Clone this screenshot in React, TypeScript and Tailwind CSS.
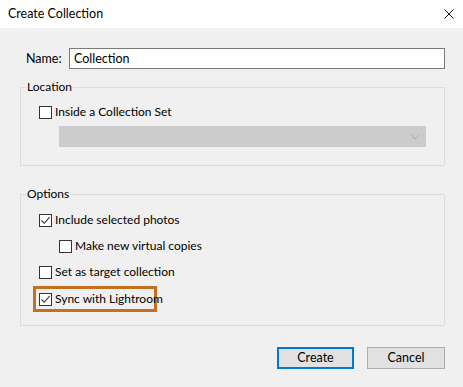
import React, { useState } from 'react';

const font = { fontFamily: 'Lato, "Segoe UI", sans-serif' };

function CheckBox({ checked, onChange }: { checked: boolean; onChange: () => void }) {
  return (
    <span
      onClick={onChange}
      className="flex h-[13px] w-[13px] shrink-0 items-center justify-center border border-[#333333] bg-white"
    >
      {checked && (
        <svg width="11" height="11" viewBox="0 0 11 11">
          <path d="M1.5 5.5 L4.2 8.3 L9.6 2.2" fill="none" stroke="#333333" strokeWidth="1.1" />
        </svg>
      )}
    </span>
  );
}

function Row({ label, checked, onChange }: { label: string; checked: boolean; onChange: () => void }) {
  return (
    <label className="flex h-[16px] items-center gap-[3px] whitespace-nowrap text-[12px] leading-[16px] text-black">
      <CheckBox checked={checked} onChange={onChange} />
      <span>{label}</span>
    </label>
  );
}

export default function App() {
  const [name, setName] = useState('Collection');
  const [insideSet, setInsideSet] = useState(false);
  const [includeSelected, setIncludeSelected] = useState(true);
  const [virtualCopies, setVirtualCopies] = useState(false);
  const [targetCollection, setTargetCollection] = useState(false);
  const [sync, setSync] = useState(true);

  return (
    <div className="flex h-[387px] w-[463px] flex-col bg-[#f0f0f0] text-black" style={font}>
      {/* title bar */}
      <div className="flex h-[28px] shrink-0 items-center justify-between bg-white pl-[8px] pr-[9px]">
        <span className="text-[12.5px] leading-[16px]">Create Collection</span>
        <svg width="10" height="10" viewBox="0 0 10 10">
          <path d="M0.5 0.5 L9.5 9.5 M9.5 0.5 L0.5 9.5" stroke="#111111" strokeWidth="1" />
        </svg>
      </div>

      {/* name */}
      <div className="mt-[20px] flex items-center pl-[26px] pr-[18px]">
        <span className="w-[43px] text-[12.5px] leading-[16px]">Name:</span>
        <input
          value={name}
          onChange={(e) => setName(e.target.value)}
          className="h-[21px] flex-1 border border-[#7a7a7a] bg-white px-[4px] text-[12.5px] leading-[16px] outline-none"
        />
      </div>

      {/* location */}
      <fieldset className="mx-[18px] ml-[20px] mt-[10px] border border-[#dcdcdc] pb-[18px]">
        <legend className="ml-[5px] px-[1px] text-[12px] leading-[16px]">Location</legend>
        <div className="pl-[18px] pt-[9px]">
          <Row label="Inside a Collection Set" checked={insideSet} onChange={() => setInsideSet(!insideSet)} />
        </div>
        <div className="ml-[38px] mr-[18px] mt-[6px] flex h-[21px] items-center justify-end bg-[#cccccc] pr-[6px]">
          <svg width="10" height="6" viewBox="0 0 10 6">
            <path d="M1 1 L5 5 L9 1" fill="none" stroke="#a8a8a8" strokeWidth="1" />
          </svg>
        </div>
      </fieldset>

      {/* options */}
      <fieldset className="mx-[18px] ml-[20px] mt-[20px] border border-[#dcdcdc] pb-[17px]">
        <legend className="ml-[5px] px-[1px] text-[12px] leading-[16px]">Options</legend>
        <div className="flex flex-col gap-[10px] pl-[18px] pt-[10px]">
          <Row label="Include selected photos" checked={includeSelected} onChange={() => setIncludeSelected(!includeSelected)} />
          <div className="pl-[20px]">
            <Row label="Make new virtual copies" checked={virtualCopies} onChange={() => setVirtualCopies(!virtualCopies)} />
          </div>
          <Row label="Set as target collection" checked={targetCollection} onChange={() => setTargetCollection(!targetCollection)} />
          <div className="-mb-[4px] -ml-[6px] -mt-[4px] w-[124px] border-[3px] border-[#c4701f] py-[2px] pl-[3px]">
            <Row label="Sync with Lightroom" checked={sync} onChange={() => setSync(!sync)} />
          </div>
        </div>
      </fieldset>

      {/* buttons */}
      <div className="mr-[18px] mt-[21px] flex justify-end gap-[13px]">
        <button className="h-[22px] w-[77px] border-2 border-[#0078d7] bg-[#e1e1e1] text-[12.5px] leading-[16px]">
          Create
        </button>
        <button className="h-[22px] w-[78px] border border-[#adadad] bg-[#e1e1e1] text-[12.5px] leading-[16px]">
          Cancel
        </button>
      </div>
    </div>
  );
}
